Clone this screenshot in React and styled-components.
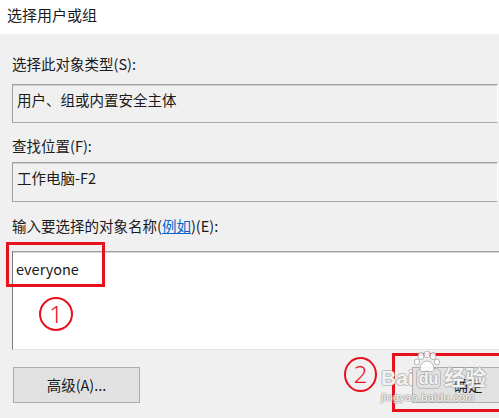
import React from 'react'

import styled, { createGlobalStyle } from 'styled-components';

const GlobalStyle = createGlobalStyle`
  html, body {
    margin: 0;
    padding: 0;
    background: #f0f0f0;
    overflow: hidden;
  }
  body {
    font-family: "Noto Sans CJK SC", "Noto Sans", sans-serif;
    color: #1a1a1a;
  }
`;

const BaiduPaw = () => (
  <svg width="28" height="22" viewBox="0 0 28 22">
    <g fill="rgba(255,255,255,0.9)" stroke="rgba(140,140,140,0.6)" strokeWidth="1">
      <ellipse cx="8" cy="5" rx="3" ry="3.6" />
      <ellipse cx="14" cy="3.5" rx="3" ry="3.4" />
      <ellipse cx="20" cy="5" rx="3" ry="3.6" />
      <ellipse cx="4" cy="11" rx="2.6" ry="3" />
      <ellipse cx="24" cy="11" rx="2.6" ry="3" />
      <path d="M14 10 C9 10 7 15 7 18 C7 21 10 21 14 20 C18 21 21 21 21 18 C21 15 19 10 14 10 Z" />
    </g>
  </svg>
);

const App = () => {
  return (
    <>
      <GlobalStyle />
      <Dialog>
        <TitleBar>选择用户或组</TitleBar>
        <DialogBody>
          <FieldLabel $top={20}>选择此对象类型(S):</FieldLabel>
          <ReadonlyBox $top={10}>用户、组或内置安全主体</ReadonlyBox>

          <FieldLabel $top={13}>查找位置(F):</FieldLabel>
          <ReadonlyBox $top={6} $height={40}>工作电脑-F2</ReadonlyBox>

          <FieldLabel $top={14}>
            输入要选择的对象名称(<HelpLink>例如</HelpLink>)(E):
          </FieldLabel>
          <NameInput>
            everyone
            <RedMark $left={-7} $top={-10} $width={99} $height={45} />
            <StepCircle $left={26} $top={45}>1</StepCircle>
          </NameInput>

          <ButtonRow>
            <DialogButton $width={127}>高级(A)...</DialogButton>
            <RightGroup>
              <StepBadge>2</StepBadge>
              <OkButton>确定</OkButton>
              <OkMark />
              <Watermark>
                <WatermarkLine>
                  Bai<PawSpot><BaiduPaw /></PawSpot><DuBox>du</DuBox>经验
                </WatermarkLine>
                <WatermarkUrl>jingyan.baidu.com</WatermarkUrl>
              </Watermark>
            </RightGroup>
          </ButtonRow>
        </DialogBody>
      </Dialog>
    </>
  );
};

export default App;

const Dialog = styled.div`
  width: 499px;
  height: 418px;
  overflow: hidden;
  background: #f0f0f0;
  display: flex;
  flex-direction: column;
`;

const TitleBar = styled.div`
  height: 34px;
  box-sizing: border-box;
  padding: 5px 0 0 7px;
  background: #ffffff;
  font-size: 15px;
  line-height: 20px;
  color: #1a1a1a;
`;

const DialogBody = styled.div`
  display: flex;
  flex-direction: column;
  padding-left: 12px;
`;

const FieldLabel = styled.div`
  margin-top: ${(p) => p.$top}px;
  height: 20px;
  font-size: 14.5px;
  line-height: 20px;
  white-space: nowrap;
`;

const HelpLink = styled.span`
  color: #0066cc;
  text-decoration: underline;
`;

const ReadonlyBox = styled.div`
  margin-top: ${(p) => p.$top}px;
  margin-right: 1px;
  height: ${(p) => p.$height || 39}px;
  box-sizing: border-box;
  padding: 5px 0 0 4px;
  background: #f0f0f0;
  border: 1px solid;
  border-color: #a0a0a0 #ffffff #a8a8a8 #a0a0a0;
  box-shadow: inset 0 1px 0 #cfcfcf;
  font-size: 14.5px;
  line-height: 20px;
`;

const NameInput = styled.div`
  position: relative;
  margin-top: 15px;
  margin-right: -12px;
  height: 99px;
  box-sizing: border-box;
  padding: 7px 0 0 3px;
  background: #ffffff;
  border-top: 1px solid #a0a0a0;
  border-left: 1px solid #7a7a7a;
  border-bottom: 1px solid #e3e3e3;
  box-shadow: inset 0 1px 0 #d4d4d4;
  font-size: 14.5px;
  line-height: 20px;
`;

const RedMark = styled.div`
  position: absolute;
  left: ${(p) => p.$left}px;
  top: ${(p) => p.$top}px;
  width: ${(p) => p.$width}px;
  height: ${(p) => p.$height}px;
  box-sizing: border-box;
  border: 3px solid #e8101c;
  pointer-events: none;
`;

const OkMark = styled.div`
  position: absolute;
  left: 48px;
  right: -40px;
  top: -14px;
  height: 59px;
  box-sizing: border-box;
  border: 3px solid #e8101c;
  border-right: none;
  pointer-events: none;
`;

const StepCircle = styled.div`
  position: absolute;
  left: ${(p) => p.$left}px;
  top: ${(p) => p.$top}px;
  width: 34px;
  height: 34px;
  box-sizing: border-box;
  border: 2px solid #e8101c;
  border-radius: 50%;
  color: #e8101c;
  font-family: "Noto Sans", sans-serif;
  font-weight: 300;
  font-size: 24px;
  line-height: 30px;
  text-align: center;
`;

const ButtonRow = styled.div`
  margin-top: 17px;
  display: flex;
  align-items: flex-start;
  height: 36px;
`;

const DialogButton = styled.div`
  flex-shrink: 0;
  width: ${(p) => p.$width}px;
  height: 36px;
  margin-left: 1px;
  box-sizing: border-box;
  background: #e1e1e1;
  border: 1px solid #adadad;
  font-size: 14.5px;
  line-height: 34px;
  text-align: center;
`;

const OkButton = styled(DialogButton)`
  width: 112px;
  margin-left: 0;
`;

const RightGroup = styled.div`
  position: relative;
  flex-shrink: 0;
  width: 180px;
  margin-left: auto;
  margin-right: -25px;
  display: flex;
  align-items: flex-start;
  gap: 35px;
`;

const StepBadge = styled(StepCircle)`
  position: static;
  flex-shrink: 0;
  margin-top: -10px;
  width: 33px;
  height: 35px;
`;

const Watermark = styled.div`
  position: absolute;
  left: 37px;
  top: -6px;
  display: flex;
  flex-direction: column;
  pointer-events: none;
  color: rgba(255, 255, 255, 0.9);
  text-shadow: 1px 0 0 rgba(150, 150, 150, 0.55), -1px 0 0 rgba(150, 150, 150, 0.55),
    0 1px 0 rgba(150, 150, 150, 0.55), 0 -1px 0 rgba(150, 150, 150, 0.55);
`;

const WatermarkLine = styled.div`
  display: flex;
  align-items: flex-end;
  font-family: "Liberation Sans", "Noto Sans CJK SC", sans-serif;
  font-weight: bold;
  font-size: 21px;
  line-height: 26px;
  height: 30px;
`;

const PawSpot = styled.span`
  position: absolute;
  left: 32px;
  top: -10px;
`;

const DuBox = styled.span`
  margin: 0 3px 2px 2px;
  padding: 0 2px;
  border-radius: 5px;
  border: 1px solid rgba(150, 150, 150, 0.5);
  font-size: 16px;
  line-height: 19px;
`;

const WatermarkUrl = styled.div`
  font-family: "Liberation Sans", sans-serif;
  font-size: 11px;
  line-height: 12px;
  letter-spacing: 0.3px;
`;
